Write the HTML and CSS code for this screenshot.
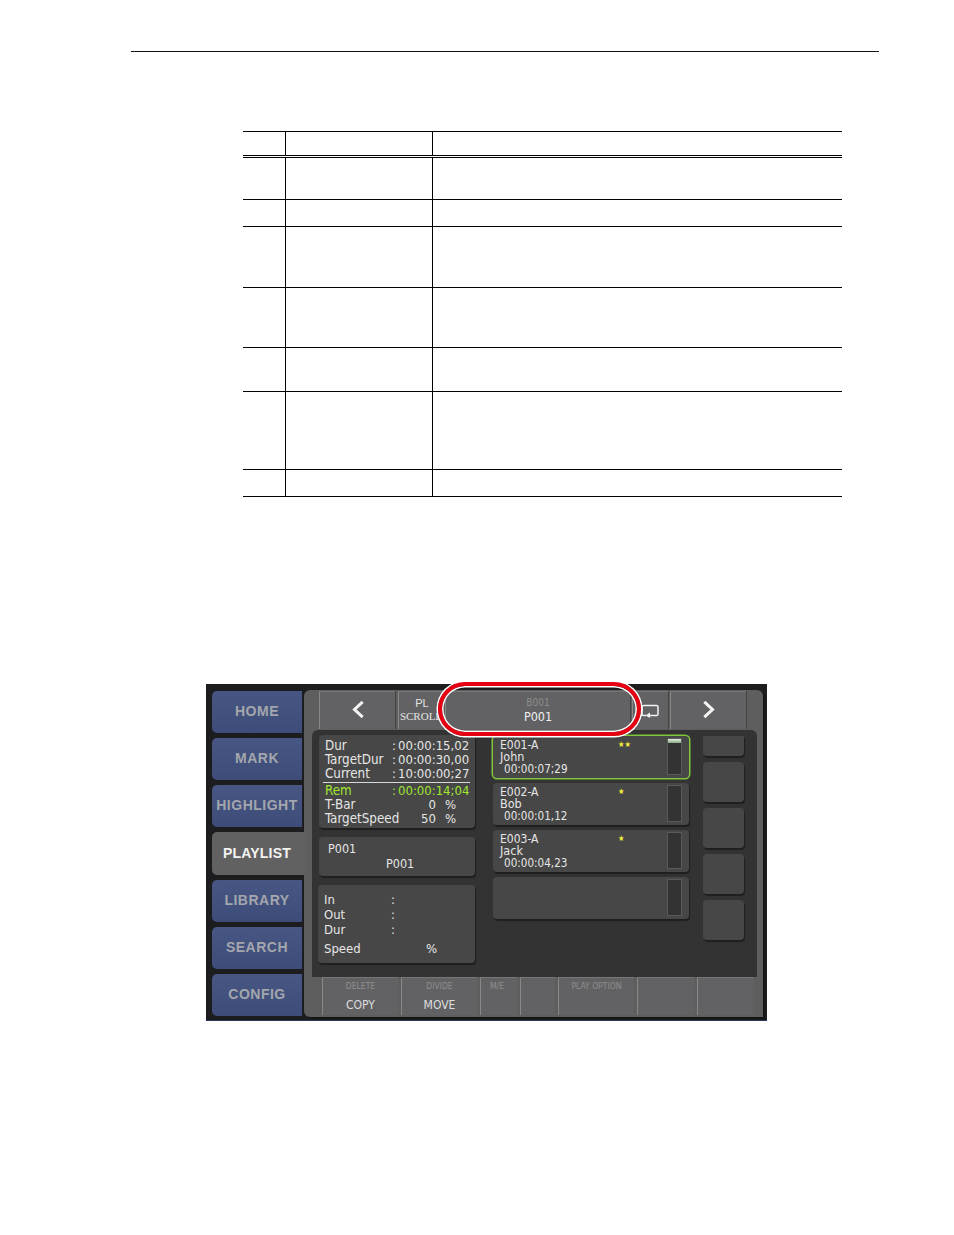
FILE: index.html
```html
<!DOCTYPE html>
<html lang="en">
<head>
<meta charset="utf-8">
<title>Playlist</title>
<link rel="stylesheet" href="styles.css">
</head>
<body>
<div class="head-rule"></div>
<div class="doc-table">
  <div class="row r-head"><div class="c1"></div><div class="c2"></div><div class="c3"></div></div>
  <div class="row r42"><div class="c1"></div><div class="c2"></div><div class="c3"></div></div>
  <div class="row r27"><div class="c1"></div><div class="c2"></div><div class="c3"></div></div>
  <div class="row r61"><div class="c1"></div><div class="c2"></div><div class="c3"></div></div>
  <div class="row r60"><div class="c1"></div><div class="c2"></div><div class="c3"></div></div>
  <div class="row r44"><div class="c1"></div><div class="c2"></div><div class="c3"></div></div>
  <div class="row r78"><div class="c1"></div><div class="c2"></div><div class="c3"></div></div>
  <div class="row r27"><div class="c1"></div><div class="c2"></div><div class="c3"></div></div>
</div>

<div class="screen">
  <nav class="nav">
    <div class="nav-btn">HOME</div>
    <div class="nav-btn">MARK</div>
    <div class="nav-btn">HIGHLIGHT</div>
    <div class="nav-btn active">PLAYLIST</div>
    <div class="nav-btn">LIBRARY</div>
    <div class="nav-btn">SEARCH</div>
    <div class="nav-btn">CONFIG</div>
  </nav>
  <main class="panel">
    <div class="top-row">
      <div class="tbtn w76"><svg class="chev" viewBox="0 0 12 16"><path d="M10 1.500 3 8l7 6.500" /></svg></div>
      <div class="tbtn w45 scroll"><span class="pl">PL</span><span>SCROLL</span></div>
      <div class="tbtn w185 title"><span class="dim">B001</span><span class="main-t">P001</span></div>
      <div class="tbtn w35"><svg class="bubble" viewBox="0 0 18 15"><path d="M5 11.500H2.500Q1 11.500 1 10V3Q1 1.500 2.500 1.500H15.500Q17 1.500 17 3V10Q17 11.500 15.500 11.500H8" /><path class="fill" d="M9 8.500V14L4.500 11.500Z" /></svg></div>
      <div class="tbtn w76"><svg class="chev" viewBox="0 0 12 16"><path d="M2 1.500 9 8l-7 6.500" /></svg></div>
    </div>
    <div class="inner">
      <div class="col-left">
        <div class="card times">
          <div class="t-row"><span class="lab">Dur</span><span class="sep">:</span><span>00:00:15,02</span></div>
          <div class="t-row"><span class="lab">TargetDur</span><span class="sep">:</span><span>00:00:30,00</span></div>
          <div class="t-row"><span class="lab">Current</span><span class="sep">:</span><span>10:00:00;27</span></div>
          <div class="t-rule"></div>
          <div class="t-row green"><span class="lab">Rem</span><span class="sep">:</span><span>00:00:14;04</span></div>
          <div class="t-row"><span class="lab">T-Bar</span><span class="val-r">0</span><span class="pct">%</span></div>
          <div class="t-row"><span class="lab">TargetSpeed</span><span class="val-r">50</span><span class="pct">%</span></div>
        </div>
        <div class="card name">
          <div>P001</div>
          <div class="name-2">P001</div>
        </div>
        <div class="card info">
          <div class="i-row"><span class="i-lab">In</span><span>:</span></div>
          <div class="i-row"><span class="i-lab">Out</span><span>:</span></div>
          <div class="i-row"><span class="i-lab">Dur</span><span>:</span></div>
          <div class="i-row speed"><span class="i-lab">Speed</span><span class="i-pct">%</span></div>
        </div>
      </div>
      <div class="col-events">
        <div class="event selected">
          <div class="e-text"><div class="e-head"><span>E001-A</span><span class="stars">★★</span></div><div>John</div><div class="e-time">00:00:07;29</div></div>
          <div class="gauge"><div class="gauge-fill"></div></div>
        </div>
        <div class="event">
          <div class="e-text"><div class="e-head"><span>E002-A</span><span class="stars">★</span></div><div>Bob</div><div class="e-time">00:00:01,12</div></div>
          <div class="gauge"></div>
        </div>
        <div class="event">
          <div class="e-text"><div class="e-head"><span>E003-A</span><span class="stars">★</span></div><div>Jack</div><div class="e-time">00:00:04,23</div></div>
          <div class="gauge"></div>
        </div>
        <div class="event">
          <div class="e-text"></div>
          <div class="gauge"></div>
        </div>
      </div>
      <div class="col-side">
        <div class="side-btn first"></div>
        <div class="side-btn"></div>
        <div class="side-btn"></div>
        <div class="side-btn"></div>
        <div class="side-btn"></div>
      </div>
    </div>
    <div class="bottom-row">
      <div class="bbtn b76"><span class="b-top">DELETE</span><span class="b-main">COPY</span></div>
      <div class="bbtn b76"><span class="b-top">DIVIDE</span><span class="b-main">MOVE</span></div>
      <div class="bbtn b37"><span class="b-top">M/E</span></div>
      <div class="bbtn b35"></div>
      <div class="bbtn b76 left-label"><span class="b-top">PLAY OPTION</span></div>
      <div class="bbtn b57"></div>
      <div class="bbtn b56"></div>
    </div>
  </main>
  <div class="oval"></div>
</div>
</body>
</html>
```
FILE: styles.css
```css
html, body { margin: 0; padding: 0; background: #fff; }
body { width: 954px; height: 1235px; overflow: hidden; padding-top: 51px; box-sizing: border-box; }

.head-rule { height: 1px; width: 748px; margin-left: 131px; background: #111; }

.doc-table { margin: 79px 0 0 243px; width: 599px; }
.row { display: flex; box-sizing: border-box; border-bottom: 1px solid #000; }
.r-head { height: 27px; border-top: 1px solid #000; border-bottom: 3px double #000; }
.r27 { height: 27px; }
.r42 { height: 42px; }
.r44 { height: 44px; }
.r60 { height: 60px; }
.r61 { height: 61px; }
.r78 { height: 78px; }
.c1 { width: 42px; }
.c2 { width: 147px; border-left: 1px solid #000; box-sizing: border-box; }
.c3 { flex: 1; border-left: 1px solid #000; }

.screen {
  position: relative;
  display: flex;
  width: 561px;
  height: 337px;
  margin: 187px 0 0 206px;
  background: linear-gradient(#1d1d1f 336px, #2b3560 336px);
  font-family: "DejaVu Sans Condensed", "DejaVu Sans", sans-serif;
  font-stretch: condensed;
  color: #e6e6e6;
}

.nav { display: flex; flex-direction: column; gap: 5px; width: 98px; padding: 7px 0 0 6px; box-sizing: border-box; }
.nav-btn {
  display: flex; align-items: center; justify-content: center;
  width: 90px; height: 42px; box-sizing: border-box;
  padding-bottom: 2px;
  border-radius: 5px 0 0 5px;
  background: linear-gradient(#475682, #3d4c78);
  font: bold 14px "Liberation Sans", sans-serif;
  letter-spacing: 0.5px;
  color: #a3a6ad;
}
.nav-btn.active {
  position: relative; z-index: 1;
  width: 93px; height: 43px;
  background: #616161;
  color: #f2f2f2;
  letter-spacing: 0.2px;
  padding-right: 3px;
}

.panel {
  display: flex; flex-direction: column;
  width: 459px; height: 327px; margin-top: 6px;
  box-sizing: border-box;
  background: #5e5e5e;
  border-radius: 6px 6px 0 6px;
  box-shadow: 2px 2px 0 #141414;
}

.top-row { display: flex; gap: 2px; height: 40px; padding: 1px 0 0 15px; box-sizing: border-box; }
.tbtn {
  display: flex; flex-direction: column; align-items: center; justify-content: center;
  height: 38px; box-sizing: border-box;
  background: #626264;
  border-top: 1px solid #777;
  border-left: 1px solid #888;
  box-shadow: 1px 0 0 #444;
}
.w76 { width: 76px; }
.w76:first-child { margin-right: 1px; }
.w45 { width: 45px; }
.w185 { width: 185px; }
.w35 { width: 36px; }
.chev { width: 14px; height: 19px; margin-bottom: 2px; fill: none; stroke: #f4f4f4; stroke-width: 2.600; }
.bubble { width: 18px; height: 15px; margin: 2px 0 0 -1px; fill: none; stroke: #f2f2f2; stroke-width: 1.500; }
.bubble .fill { fill: #f2f2f2; stroke: none; }
.scroll { font-family: "Liberation Serif", serif; font-size: 11px; line-height: 13px; color: #e4e4e4; padding-bottom: 2px; }
.pl { font-family: "Liberation Sans", sans-serif; padding-left: 2px; }
.title { line-height: 14px; padding-bottom: 2px; }
.dim { font-size: 10px; color: #8d8d8d; }
.main-t { font-size: 12.500px; color: #f0f0f0; }

.inner {
  display: flex; height: 247px; width: 445px; margin-left: 8px;
  box-sizing: border-box; padding: 5px 0 0 6px;
  background: #333334;
  border-radius: 6px 6px 0 0;
  font-size: 12.500px;
}

.col-left { display: flex; flex-direction: column; gap: 9px; width: 157px; }
.card {
  box-sizing: border-box;
  background: #474747;
  border-radius: 4px;
  box-shadow: 1px 2px 1px #1f1f1f;
}
.times { height: 93px; margin-left: 1px; width: 156px; padding: 4px 0 0 6px; line-height: 14px; font-size: 13px; }
.t-row { display: flex; height: 14px; }
.lab { width: 67px; font-size: 13.300px; }
.sep { width: 6px; }
.val-r { width: 44px; text-align: right; }
.pct { margin-left: 9px; }
.t-rule { height: 1px; margin: 1px 5px 1px -2px; background: #d8d8d8; }
.green { color: #9fe62e; }
.name { height: 39px; margin-left: 1px; width: 156px; padding: 5px 0 0 9px; line-height: 14px; }
.name-2 { padding: 1px 0 0 58px; }
.info { height: 78px; padding: 7px 0 0 6px; line-height: 15px; width: 157px; font-size: 13px; }
.i-row { display: flex; height: 15px; }
.i-lab { width: 67px; }
.speed { margin-top: 4px; }
.i-pct { margin-left: 35px; }

.col-events { display: flex; flex-direction: column; gap: 5px; width: 196px; margin: 1px 0 0 18px; }
.event {
  display: flex; justify-content: space-between;
  height: 42px; box-sizing: border-box;
  padding: 2px 7px 3px 7px;
  background: #474747;
  border-radius: 4px;
  box-shadow: 1px 2px 1px #1f1f1f;
  line-height: 12px;
}
.selected { box-shadow: 0 0 0 1.500px #7fc63a; }
.e-text { flex: 1; padding-top: 1px; }
.e-head { display: flex; font-size: 12px; }
.e-head > span:first-child { width: 118px; }
.stars { font-size: 8px; color: #f6f03c; }
.e-time { padding-left: 4px; font-size: 11.600px; }
.gauge { width: 15px; box-sizing: border-box; background: #333; border: 1px solid #5a5a5a; }
.gauge-fill { height: 4px; background: linear-gradient(#e6efe0, #86a884); }

.col-side { display: flex; flex-direction: column; gap: 6px; width: 41px; margin: 1px 0 0 14px; }
.side-btn {
  height: 40px; box-sizing: border-box;
  background: #474747;
  border-radius: 4px;
  box-shadow: 1px 2px 1px #1f1f1f;
}
.side-btn.first { height: 20px; border-radius: 0 0 4px 4px; }

.bottom-row { display: flex; gap: 3px; height: 38px; padding-left: 18px; }
.bbtn {
  display: flex; flex-direction: column; align-items: center;
  box-sizing: border-box; height: 38px;
  background: #626264;
  border-top: 1px solid #777;
  border-left: 1px solid #888;
}
.b76 { width: 76px; }
.b37 { width: 37px; align-items: flex-start; padding-left: 9px; }
.b35 { width: 35px; }
.b57 { width: 57px; }
.b56 { width: 56px; }
.b-top { font-size: 8.500px; line-height: 9px; margin-top: 4px; color: #8e8e8e; }
.b-main { font-size: 12px; line-height: 14px; margin-top: 7px; color: #dedede; }

.oval {
  position: absolute; left: 232px; top: -2px;
  width: 203px; height: 54px;
  box-sizing: border-box;
  border: 4px solid #e60012;
  border-radius: 27px;
  box-shadow: 0 0 0 1.500px #fff, inset 0 0 0 1.500px #fff;
}
```
